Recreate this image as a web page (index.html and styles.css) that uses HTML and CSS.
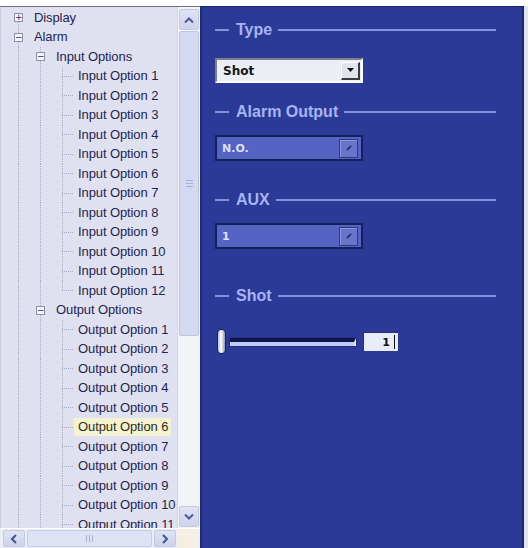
FILE: index.html
```html
<!DOCTYPE html>
<html>
<head>
<meta charset="utf-8">
<link rel="stylesheet" href="styles.css">
</head>
<body>
<div class="app">
  <div class="tree-panel">
    <div class="tree-view">
      <div class="tree">
        <div class="row"><span class="g exp top"><span class="box">+</span></span><span class="label">Display</span></div>
        <div class="row"><span class="g exp"><span class="box">−</span></span><span class="label">Alarm</span></div>
        <div class="row"><span class="g"></span><span class="g exp"><span class="box">−</span></span><span class="label">Input Options</span></div>
        <div class="row"><span class="g"></span><span class="g"></span><span class="g leaf"></span><span class="label">Input Option 1</span></div>
        <div class="row"><span class="g"></span><span class="g"></span><span class="g leaf"></span><span class="label">Input Option 2</span></div>
        <div class="row"><span class="g"></span><span class="g"></span><span class="g leaf"></span><span class="label">Input Option 3</span></div>
        <div class="row"><span class="g"></span><span class="g"></span><span class="g leaf"></span><span class="label">Input Option 4</span></div>
        <div class="row"><span class="g"></span><span class="g"></span><span class="g leaf"></span><span class="label">Input Option 5</span></div>
        <div class="row"><span class="g"></span><span class="g"></span><span class="g leaf"></span><span class="label">Input Option 6</span></div>
        <div class="row"><span class="g"></span><span class="g"></span><span class="g leaf"></span><span class="label">Input Option 7</span></div>
        <div class="row"><span class="g"></span><span class="g"></span><span class="g leaf"></span><span class="label">Input Option 8</span></div>
        <div class="row"><span class="g"></span><span class="g"></span><span class="g leaf"></span><span class="label">Input Option 9</span></div>
        <div class="row"><span class="g"></span><span class="g"></span><span class="g leaf"></span><span class="label">Input Option 10</span></div>
        <div class="row"><span class="g"></span><span class="g"></span><span class="g leaf"></span><span class="label">Input Option 11</span></div>
        <div class="row"><span class="g"></span><span class="g"></span><span class="g leaf last"></span><span class="label">Input Option 12</span></div>
        <div class="row"><span class="g"></span><span class="g exp"><span class="box">−</span></span><span class="label">Output Options</span></div>
        <div class="row"><span class="g"></span><span class="g"></span><span class="g leaf"></span><span class="label">Output Option 1</span></div>
        <div class="row"><span class="g"></span><span class="g"></span><span class="g leaf"></span><span class="label">Output Option 2</span></div>
        <div class="row"><span class="g"></span><span class="g"></span><span class="g leaf"></span><span class="label">Output Option 3</span></div>
        <div class="row"><span class="g"></span><span class="g"></span><span class="g leaf"></span><span class="label">Output Option 4</span></div>
        <div class="row"><span class="g"></span><span class="g"></span><span class="g leaf"></span><span class="label">Output Option 5</span></div>
        <div class="row"><span class="g"></span><span class="g"></span><span class="g leaf"></span><span class="label selected">Output Option 6</span></div>
        <div class="row"><span class="g"></span><span class="g"></span><span class="g leaf"></span><span class="label">Output Option 7</span></div>
        <div class="row"><span class="g"></span><span class="g"></span><span class="g leaf"></span><span class="label">Output Option 8</span></div>
        <div class="row"><span class="g"></span><span class="g"></span><span class="g leaf"></span><span class="label">Output Option 9</span></div>
        <div class="row"><span class="g"></span><span class="g"></span><span class="g leaf"></span><span class="label">Output Option 10</span></div>
        <div class="row"><span class="g"></span><span class="g"></span><span class="g leaf"></span><span class="label">Output Option 11</span></div>
      </div>
      <div class="vscroll">
        <div class="sb-btn"><svg width="12" height="8" viewBox="0 0 12 8"><path d="M2 6.5 L6 2.5 L10 6.5" fill="none" stroke="#4d5c94" stroke-width="2"/></svg></div>
        <div class="vtrack">
          <div class="vthumb"><span class="grip-h"></span><span class="grip-h"></span><span class="grip-h"></span></div>
        </div>
        <div class="sb-btn"><svg width="12" height="8" viewBox="0 0 12 8"><path d="M2 1.5 L6 5.5 L10 1.5" fill="none" stroke="#4d5c94" stroke-width="2"/></svg></div>
      </div>
    </div>
    <div class="hbar">
      <div class="hscroll">
        <div class="sb-btn h"><svg width="8" height="12" viewBox="0 0 8 12"><path d="M6 2 L2 6 L6 10" fill="none" stroke="#3f5596" stroke-width="2"/></svg></div>
        <div class="hthumb"><span class="grip-v"></span><span class="grip-v"></span><span class="grip-v"></span></div>
        <div class="sb-btn h"><svg width="8" height="12" viewBox="0 0 8 12"><path d="M2 2 L6 6 L2 10" fill="none" stroke="#3f5596" stroke-width="2"/></svg></div>
      </div>
      <div class="corner"></div>
    </div>
  </div>

  <div class="settings">
    <div class="hdr">Type</div>
    <div class="combo light type-combo">
      <span class="value">Shot</span>
      <span class="drop"><svg width="7" height="4" viewBox="0 0 7 4"><path d="M0 0 H7 L3.5 4 Z" fill="#111"/></svg></span>
    </div>

    <div class="hdr alarm-hdr">Alarm Output</div>
    <div class="combo dim alarm-combo">
      <span class="value">N.O.</span>
      <span class="drop"><svg width="6" height="6" viewBox="0 0 6 6"><path d="M1 5 L5 1" stroke="#1b2466" stroke-width="1.6"/></svg></span>
    </div>

    <div class="hdr aux-hdr">AUX</div>
    <div class="combo dim aux-combo">
      <span class="value">1</span>
      <span class="drop"><svg width="6" height="6" viewBox="0 0 6 6"><path d="M1 5 L5 1" stroke="#1b2466" stroke-width="1.6"/></svg></span>
    </div>

    <div class="hdr shot-hdr">Shot</div>
    <div class="slider-row">
      <span class="knob"></span>
      <span class="track"></span>
      <span class="num">1<span class="caret"></span></span>
    </div>
  </div>
  <div class="edge"></div>
</div>
</body>
</html>
```

FILE: styles.css
```css
* { box-sizing: border-box; }

html, body {
  margin: 0;
  padding: 0;
  background: #ffffff;
}

body {
  width: 528px;
  height: 548px;
  overflow: hidden;
  font-family: "Liberation Sans", Arial, sans-serif;
}

.app {
  display: flex;
  height: 548px;
  padding-top: 6px;
}

/* ---------- left tree panel ---------- */
.tree-panel {
  width: 200px;
  flex: none;
  display: flex;
  flex-direction: column;
  border-top: 1px solid #6f7280;
  background: #dfe1f0;
}

.tree-view {
  flex: 1;
  display: flex;
  min-height: 0;
}

.tree {
  flex: 1;
  overflow: hidden;
  padding: 1px 0 0 7px;
  border-left: 1px solid #c9cde2;
}

.row {
  display: flex;
  align-items: center;
  height: 19.5px;
  white-space: nowrap;
}

.g {
  width: 22px;
  height: 100%;
  flex: none;
  display: flex;
  align-items: center;
  justify-content: center;
  background:
    repeating-linear-gradient(to bottom, #a9aec6 0 1px, transparent 1px 2px) 10px 0 / 1px 100% no-repeat;
}

.g.top {
  background:
    repeating-linear-gradient(to bottom, #a9aec6 0 1px, transparent 1px 2px) 10px 100% / 1px 50% no-repeat;
}

.g.leaf {
  background:
    repeating-linear-gradient(to bottom, #a9aec6 0 1px, transparent 1px 2px) 10px 0 / 1px 100% no-repeat,
    repeating-linear-gradient(to right, #a9aec6 0 1px, transparent 1px 2px) 10px 50% / 12px 1px no-repeat;
}

.g.leaf.last {
  background:
    repeating-linear-gradient(to bottom, #a9aec6 0 1px, transparent 1px 2px) 10px 0 / 1px 50% no-repeat,
    repeating-linear-gradient(to right, #a9aec6 0 1px, transparent 1px 2px) 10px 50% / 12px 1px no-repeat;
}

.box {
  width: 9px;
  height: 9px;
  border: 1px solid #8e93ad;
  background: #f4f5fb;
  color: #2b3160;
  font-size: 9px;
  line-height: 7px;
  text-align: center;
  font-family: "DejaVu Sans", sans-serif;
  margin-left: -1px;
}

.label {
  font-size: 13px;
  color: #1f2452;
  padding: 0 3px 0 4px;
  line-height: 18px;
  letter-spacing: -0.1px;
}

.label.selected {
  background: #f4f2cf;
  color: #2e2e1c;
}

/* vertical scrollbar */
.vscroll {
  width: 23px;
  flex: none;
  display: flex;
  flex-direction: column;
  background: #f3f4f8;
  padding: 2px 1px 1px 1px;
  border-left: 1px solid #d0d4e6;
}

.sb-btn {
  height: 21px;
  flex: none;
  display: flex;
  align-items: center;
  justify-content: center;
  background: linear-gradient(#dfe3f3, #cdd3ec);
  border: 1px solid #c3c9e3;
  border-radius: 2px;
}

.vtrack {
  flex: 1;
  padding: 1px 0;
}

.vthumb {
  height: 305px;
  background: #d3d9f0;
  border: 1px solid #bcc4e3;
  border-radius: 2px;
  display: flex;
  flex-direction: column;
  align-items: center;
  justify-content: center;
  gap: 2px;
}

.grip-h {
  width: 7px;
  height: 1px;
  background: #a5aed4;
}

/* horizontal scrollbar */
.hbar {
  height: 20px;
  flex: none;
  display: flex;
  border-top: 1px solid #ffffff;
}

.hscroll {
  flex: 1;
  display: flex;
  gap: 2px;
  padding: 1px 1px 1px 3px;
  background: #eceef7;
}

.sb-btn.h {
  width: 22px;
  height: auto;
}

.hthumb {
  flex: 1;
  background: #dde2f4;
  border: 1px solid #c5cce8;
  border-radius: 2px;
  display: flex;
  align-items: center;
  justify-content: center;
  gap: 2px;
}

.grip-v {
  width: 1px;
  height: 7px;
  background: #aab2d6;
}

.corner {
  width: 23px;
  flex: none;
  background: #f5eee2;
}

/* ---------- settings panel ---------- */
.settings {
  width: 324px;
  flex: none;
  background: #2b3a97;
  border-top: 1px solid #1b2570;
  border-left: 2px solid #1f2a7c;
  border-right: 2px solid #1d266e;
  padding: 13px 0 0 13px;
  display: flex;
  flex-direction: column;
  align-items: flex-start;
}

.edge {
  flex: 1;
  background: #dfe5f3;
}

.hdr {
  width: 281px;
  height: 20px;
  display: flex;
  align-items: center;
  font-family: "Liberation Sans", Arial, sans-serif;
  font-weight: bold;
  font-size: 16px;
  color: #a7b4f2;
}

.hdr::before {
  content: "";
  width: 14px;
  height: 2px;
  background: #8492da;
  margin-right: 7px;
}

.hdr::after {
  content: "";
  flex: 1;
  height: 2px;
  background: #8492da;
  margin-left: 6px;
}

.combo {
  width: 148px;
  display: flex;
  align-items: center;
  justify-content: space-between;
}

.combo .value {
  font-family: "DejaVu Sans", sans-serif;
  font-weight: bold;
}

.combo.light {
  height: 25px;
  background: #eceef6;
  border-top: 2px solid #7d7f8c;
  border-left: 2px solid #7d7f8c;
  border-right: 2px solid #fafbff;
  border-bottom: 2px solid #fafbff;
  padding: 0 1px 0 6px;
}

.combo.light .value {
  font-size: 12px;
  color: #151515;
}

.combo.light .drop {
  width: 19px;
  height: 18px;
  display: flex;
  align-items: center;
  justify-content: center;
  background: #e2e4ec;
  border-top: 1px solid #ffffff;
  border-left: 1px solid #ffffff;
  border-right: 2px solid #3a3a44;
  border-bottom: 2px solid #3a3a44;
}

.combo.dim {
  height: 26px;
  background: #5564c2;
  border: 2px solid #151f5c;
  padding: 0 3px 0 5px;
}

.combo.dim .value {
  font-size: 11px;
  color: #dce2ff;
}

.combo.dim .drop {
  width: 19px;
  height: 19px;
  display: flex;
  align-items: center;
  justify-content: center;
  background: #6674c9;
  border: 1px solid #2c387f;
  box-shadow: inset 1px 1px 0 #8c98dc;
}

.type-combo { margin-top: 18px; }
.alarm-hdr { margin-top: 19px; }
.alarm-combo { margin-top: 13px; }
.aux-hdr { margin-top: 29px; }
.aux-combo { margin-top: 13px; height: 25px; }
.shot-hdr { margin-top: 37px; }

.slider-row {
  margin-top: 23px;
  height: 25px;
  display: flex;
  align-items: center;
}

.knob {
  width: 9px;
  height: 25px;
  margin-left: 2px;
  border-radius: 4px;
  background: linear-gradient(to right, #b9bfd9, #ffffff 45%, #8d94b8);
  border: 1px solid #1a2264;
}

.track {
  width: 126px;
  height: 8px;
  margin-left: 4px;
  border-top: 4px solid #0e164f;
  background: #c3cbf1;
  border-right: 2px solid #dfe4fb;
  box-shadow: 0 0 0 1px #23307f;
}

.num {
  width: 35px;
  height: 19px;
  margin-left: 7px;
  background: #e8ecf8;
  border-top: 1px solid #2a326a;
  border-left: 1px solid #2a326a;
  font-family: "DejaVu Sans", sans-serif;
  font-weight: bold;
  font-size: 11px;
  color: #111;
  display: flex;
  align-items: center;
  justify-content: flex-end;
  padding-right: 3px;
}

.caret {
  width: 1px;
  height: 14px;
  background: #111;
  margin-left: 4px;
}
```
